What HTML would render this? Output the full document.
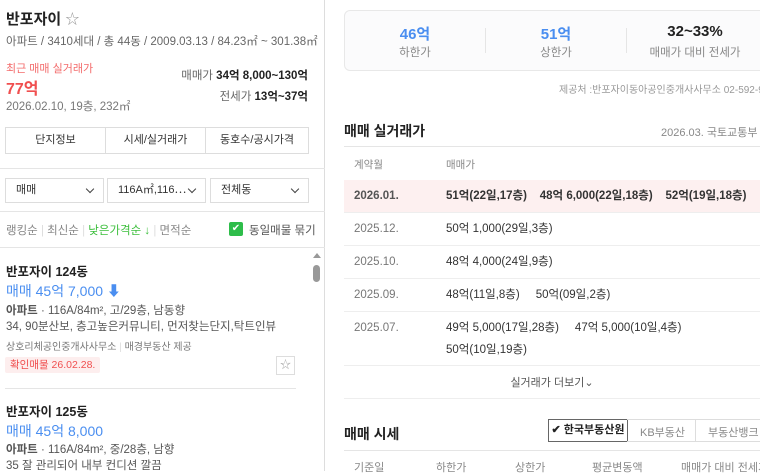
<!DOCTYPE html><html><head><meta charset="utf-8"><style>
*{margin:0;padding:0;box-sizing:border-box}
body{width:760px;height:471px;overflow:hidden;background:#fff;font-family:"Liberation Sans","Noto Sans CJK KR",sans-serif;color:#333;position:relative;font-size:12px}
.a{position:absolute;white-space:nowrap}
#left{position:absolute;left:0;top:0;width:325px;height:471px;border-right:1px solid #ddd;background:#fff}
.btn{position:absolute;top:127px;height:27px;border:1px solid #ddd;text-align:center;line-height:25px;font-size:11px;color:#333;background:#fff}
.sel{position:absolute;top:178px;height:25px;border:1px solid #ddd;font-size:11px;line-height:23px;padding-left:10px;color:#333}
.sel:after{content:"";position:absolute;right:10px;top:7px;width:5px;height:5px;border-right:1.5px solid #444;border-bottom:1.5px solid #444;transform:rotate(45deg)}
.blue{color:#4a8ef0}
.row{position:absolute;left:344px;width:416px;height:33px;border-bottom:1px solid #eee;font-size:11.5px;line-height:33px}
.row .d{position:absolute;left:10px;color:#777}
.row .v{position:absolute;left:102px;color:#333}
</style></head><body>
<div id="left">
<div class="a" style="left:6px;top:8px;font-size:15px;font-weight:bold;color:#222">반포자이 <span style="color:#999;font-weight:normal;font-size:14px">☆</span></div>
<div class="a" style="left:6px;top:33px;font-size:11.5px;color:#666">아파트 / 3410세대 / 총 44동 / 2009.03.13 / 84.23㎡ ~ 301.38㎡</div>
<div class="a" style="left:6px;top:60px;font-size:11px;color:#f36b6b">최근 매매 실거래가</div>
<div class="a" style="left:6px;top:75px;font-size:16px;font-weight:bold;color:#f04f4f">77억</div>
<div class="a" style="left:6px;top:98px;font-size:11.5px;color:#777">2026.02.10, 19층, 232㎡</div>
<div class="a" style="right:16px;top:67px;font-size:11.5px;color:#666">매매가 <b style="color:#222">34억 8,000~130억</b></div>
<div class="a" style="right:16px;top:88px;font-size:11.5px;color:#666">전세가 <b style="color:#222">13억~37억</b></div>
<div class="btn" style="left:5px;width:101px">단지정보</div>
<div class="btn" style="left:105px;width:101px">시세/실거래가</div>
<div class="btn" style="left:205px;width:104px">동호수/공시가격</div>
<div style="position:absolute;left:0;top:168px;width:325px;height:1px;background:#e5e5e5"></div>
<div style="position:absolute;left:0;top:211px;width:325px;height:1px;background:#e5e5e5"></div>
<div class="sel" style="left:5px;width:99px">매매</div>
<div class="sel" style="left:107px;width:99px">116A㎡,116⋯</div>
<div class="sel" style="left:210px;width:99px">전체동</div>
<div class="a" style="left:6px;top:222px;font-size:11.5px;color:#888">랭킹순 <span style="color:#ddd">|</span> 최신순 <span style="color:#ddd">|</span> <span style="color:#3cbf3c">낮은가격순 ↓</span> <span style="color:#ddd">|</span> 면적순</div>
<div style="position:absolute;left:229px;top:222px;width:14px;height:14px;background:#2ebd4a;border-radius:2px;color:#fff;font-size:10px;text-align:center;line-height:14px">✔</div>
<div class="a" style="left:249px;top:222px;font-size:11.5px;color:#555">동일매물 묶기</div>
<div style="position:absolute;left:0;top:247px;width:325px;height:1px;background:#e5e5e5"></div>
<div class="a" style="left:313px;top:253px;width:0;height:0;border-left:4px solid transparent;border-right:4px solid transparent;border-bottom:5px solid #999"></div>
<div style="position:absolute;left:313px;top:265px;width:7px;height:17px;border-radius:4px;background:#999"></div>
<div class="a" style="left:6px;top:261px;font-size:12.5px;font-weight:bold;color:#222">반포자이 124동</div>
<div class="a blue" style="left:6px;top:281px;font-size:14px">매매 45억 7,000 <b>⬇</b></div>
<div class="a" style="left:6px;top:302px;font-size:11.5px;color:#555"><b>아파트</b> · 116A/84m², 고/29층, 남동향</div>
<div class="a" style="left:6px;top:318px;font-size:11.5px;color:#555">34, 90분산보, 층고높은커뮤니티, 먼저찾는단지,탁트인뷰</div>
<div class="a" style="left:6px;top:338px;font-size:10px;color:#777">상호리체공인중개사사무소 <span style="color:#ddd">|</span> 매경부동산 제공</div>
<div class="a" style="left:5px;top:357px;height:16px;padding:0 5px;background:#fdeeee;color:#f04f4f;font-size:10.5px;line-height:16px;border-radius:2px">확인매물 26.02.28.</div>
<div class="a" style="left:276px;top:356px;width:19px;height:19px;border:1px solid #ddd;color:#aaa;text-align:center;line-height:17px;font-size:11px">☆</div>
<div style="position:absolute;left:5px;top:388px;width:291px;height:1px;background:#e5e5e5"></div>
<div class="a" style="left:6px;top:401px;font-size:12.5px;font-weight:bold;color:#222">반포자이 125동</div>
<div class="a blue" style="left:6px;top:421px;font-size:14px">매매 45억 8,000</div>
<div class="a" style="left:6px;top:441px;font-size:11.5px;color:#555"><b>아파트</b> · 116A/84m², 중/28층, 남향</div>
<div class="a" style="left:6px;top:457px;font-size:11.5px;color:#555">35 잘 관리되어 내부 컨디션 깔끔</div>
</div>
<div style="position:absolute;left:344px;top:10px;width:430px;height:61px;border:1px solid #e8e8e8;border-radius:6px;background:#fbfbfc"></div>
<div style="position:absolute;left:485px;top:28px;width:1px;height:25px;background:#e5e5e5"></div>
<div style="position:absolute;left:626px;top:28px;width:1px;height:25px;background:#e5e5e5"></div>
<div class="a blue" style="left:365px;width:100px;text-align:center;top:23px;font-size:15px;font-weight:bold">46억</div>
<div class="a" style="left:365px;width:100px;text-align:center;top:44px;font-size:11.5px;color:#888">하한가</div>
<div class="a blue" style="left:506px;width:100px;text-align:center;top:23px;font-size:15px;font-weight:bold">51억</div>
<div class="a" style="left:506px;width:100px;text-align:center;top:44px;font-size:11.5px;color:#888">상한가</div>
<div class="a" style="left:645px;width:100px;text-align:center;top:23px;font-size:15px;font-weight:bold;color:#222">32~33%</div>
<div class="a" style="left:645px;width:100px;text-align:center;top:44px;font-size:11.5px;color:#888">매매가 대비 전세가</div>
<div class="a" style="left:559px;top:81px;font-size:10px;color:#999">제공처 :반포자이동아공인중개사사무소 02-592-9454</div>
<div class="a" style="left:344px;top:121px;font-size:14px;font-weight:bold;color:#222">매매 실거래가</div>
<div class="a" style="left:661px;top:124px;font-size:11px;color:#888">2026.03. 국토교통부 기준</div>
<div style="position:absolute;left:344px;top:146px;width:416px;height:1px;background:#e5e5e5"></div>
<div class="a" style="left:354px;top:157px;font-size:10.5px;color:#888">계약월</div>
<div class="a" style="left:446px;top:157px;font-size:10.5px;color:#888">매매가</div>
<div class="row" style="top:180px;background:#fdf0f0;font-weight:bold"><span class="d" style="color:#555">2026.01.</span><span class="v">51억(22일,17층) &nbsp;&nbsp; 48억 6,000(22일,18층) &nbsp;&nbsp; 52억(19일,18층)</span></div>
<div class="row" style="top:213px"><span class="d">2025.12.</span><span class="v">50억 1,000(29일,3층)</span></div>
<div class="row" style="top:246px"><span class="d">2025.10.</span><span class="v">48억 4,000(24일,9층)</span></div>
<div class="row" style="top:279px"><span class="d">2025.09.</span><span class="v">48억(11일,8층) &nbsp;&nbsp;&nbsp; 50억(09일,2층)</span></div>
<div class="row" style="top:312px;height:54px"><span class="d">2025.07.</span><span class="v">49억 5,000(17일,28층) &nbsp;&nbsp;&nbsp; 47억 5,000(10일,4층)</span><span class="v" style="top:22px">50억(10일,19층)</span></div>
<div class="a" style="left:344px;width:416px;text-align:center;top:374px;font-size:11px;color:#555">실거래가 더보기⌄</div>
<div style="position:absolute;left:344px;top:398px;width:416px;height:1px;background:#eee"></div>
<div class="a" style="left:344px;top:424px;font-size:14px;font-weight:bold;color:#222">매매 시세</div>
<div style="position:absolute;left:548px;top:419px;width:80px;height:23px;border:1px solid #666;font-size:11px;font-weight:bold;text-align:center;line-height:21px;color:#222;background:#fff">✔ 한국부동산원</div>
<div style="position:absolute;left:627px;top:419px;width:140px;height:23px;border:1px solid #ddd;border-left:none"></div>
<div style="position:absolute;left:695px;top:419px;width:1px;height:23px;background:#ddd"></div>
<div class="a" style="left:640px;top:424px;font-size:11px;color:#888">KB부동산</div>
<div class="a" style="left:708px;top:424px;font-size:11px;color:#888">부동산뱅크</div>
<div style="position:absolute;left:344px;top:450px;width:416px;height:1px;background:#e5e5e5"></div>
<div class="a" style="left:354px;top:459px;font-size:11px;color:#888">기준일</div>
<div class="a" style="left:436px;top:459px;font-size:11px;color:#888">하한가</div>
<div class="a" style="left:515px;top:459px;font-size:11px;color:#888">상한가</div>
<div class="a" style="left:592px;top:459px;font-size:11px;color:#888">평균변동액</div>
<div class="a" style="left:681px;top:459px;font-size:11px;color:#888">매매가 대비 전세가</div>
</body></html>
